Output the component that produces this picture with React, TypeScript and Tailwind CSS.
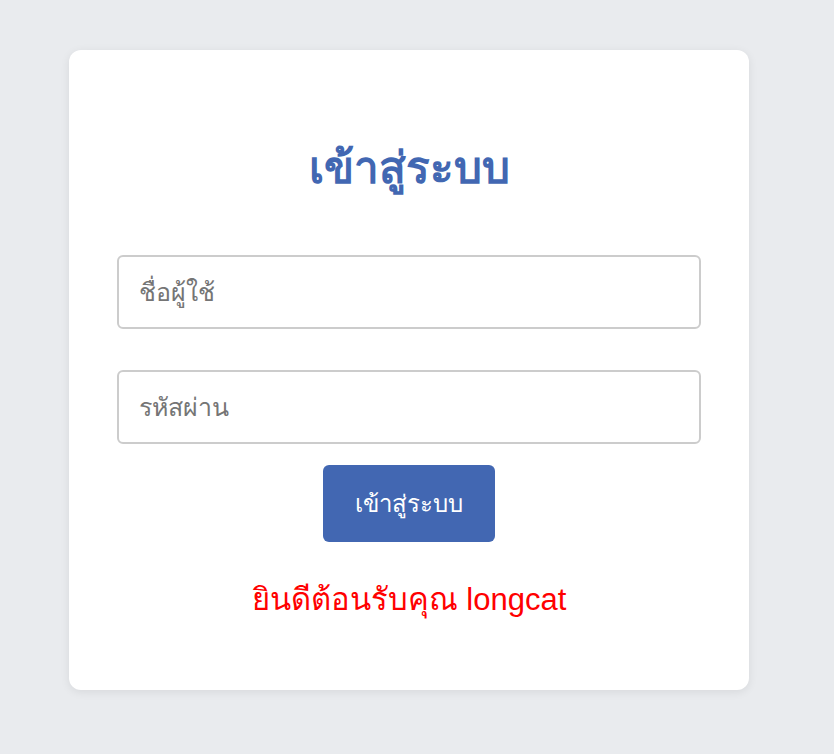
export default function App() {
  return (
    <div className="min-h-screen bg-[#e9ebee] flex justify-center pt-[50px] pr-4 font-['Liberation_Sans',sans-serif]">
      <div className="w-[680px] h-[640px] bg-white rounded-xl shadow-[0_2px_10px_rgba(0,0,0,0.08)] px-12 pt-[88px]">
        <h1 className="text-center text-[44px] font-bold text-[#4267b2] leading-[60px]">เข้าสู่ระบบ</h1>
        <form className="mt-[57px] flex flex-col items-center" onSubmit={(e) => e.preventDefault()}>
          <input
            type="text"
            placeholder="ชื่อผู้ใช้"
            className="w-full h-[74px] px-5 text-[25px] border-2 border-[#ccc] rounded-md outline-none placeholder:text-[#757575]"
          />
          <input
            type="password"
            placeholder="รหัสผ่าน"
            className="w-full h-[74px] px-5 mt-[41px] text-[25px] border-2 border-[#ccc] rounded-md outline-none placeholder:text-[#757575]"
          />
          <button
            type="submit"
            className="mt-[21px] w-[172px] h-[77px] bg-[#4267b2] text-white text-[24px] rounded-md"
          >
            เข้าสู่ระบบ
          </button>
        </form>
        <p className="mt-[38px] text-center text-[31px] leading-[40px] text-[#ff0000]">ยินดีต้อนรับคุณ longcat</p>
      </div>
    </div>
  );
}
